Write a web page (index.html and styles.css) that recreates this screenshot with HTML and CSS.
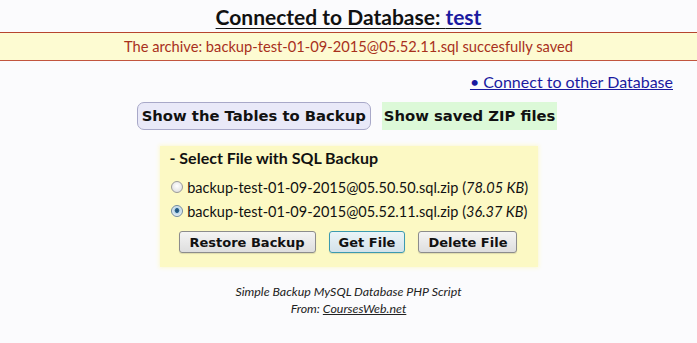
FILE: index.html
```html
<!DOCTYPE html>
<html>
<head>
<meta charset="utf-8">
<link rel="stylesheet" href="styles.css">
</head>
<body>
<h1 class="title">Connected to Database: <span class="dbname">test</span></h1>
<div class="msg">The archive: backup-test-01-09-2015@05.52.11.sql succesfully saved</div>
<div class="connect"><a href="#" class="connect-link">• Connect to other Database</a></div>
<div class="tabs">
  <span class="tab tab-tables">Show the Tables to Backup</span>
  <span class="tab tab-zip">Show saved ZIP files</span>
</div>
<form class="panel">
  <div class="panel-title">- Select File with SQL Backup</div>
  <label class="row"><input type="radio" name="f" class="radio"> backup-test-01-09-2015@05.50.50.sql.zip (<em>78.05 KB</em>)</label>
  <label class="row"><input type="radio" name="f" class="radio" checked> backup-test-01-09-2015@05.52.11.sql.zip (<em>36.37 KB</em>)</label>
  <div class="actions">
    <button type="button" class="btn btn-wide">Restore Backup</button>
    <button type="button" class="btn btn-focus">Get File</button>
    <button type="button" class="btn">Delete File</button>
  </div>
</form>
<div class="footer">
  <div>Simple Backup MySQL Database PHP Script</div>
  <div>From: <a href="#" class="footer-link">CoursesWeb.net</a></div>
</div>
</body>
</html>
```
FILE: styles.css
```css
html, body {
  margin: 0;
  padding: 0;
  background: #fbfbfd;
}
body {
  font-family: Lato, "Open Sans", sans-serif;
  color: #111;
  width: 697px;
  height: 343px;
  overflow: hidden;
}
.title {
  margin: 0;
  padding-top: 4px;
  height: 28px;
  text-align: center;
  font-size: 21px;
  font-weight: bold;
  text-decoration: underline;
  text-underline-offset: 3px;
  text-decoration-thickness: 1px;
  line-height: 26px;
  color: #111;
}
.dbname {
  color: #1a1aa0;
}
.msg {
  height: 27px;
  line-height: 27px;
  background: #fdfbd2;
  border-top: 1px solid #b6452f;
  border-bottom: 1px solid #c2553e;
  color: #a8301c;
  font-size: 14.7px;
  text-align: center;
}
.connect {
  text-align: right;
  padding-right: 24px;
  margin-top: 10px;
  height: 22px;
  line-height: 22px;
  font-size: 16px;
}
.connect-link {
  color: #1a1aa0;
  text-decoration: underline;
}
.tabs {
  display: flex;
  justify-content: center;
  gap: 11px;
  margin-top: 9px;
  padding-right: 3px;
  font-family: "DejaVu Sans", Verdana, sans-serif;
  font-weight: bold;
  font-size: 14.8px;
}
.tab {
  display: inline-block;
  height: 28px;
  line-height: 28px;
  padding: 0 4px;
  color: #111;
  box-sizing: border-box;
}
.tab-tables {
  background: #e9e9f8;
  border: 1px solid #a8a8c8;
  border-radius: 7px;
  line-height: 26px;
}
.tab-zip {
  background: #dcf9d8;
  padding: 0 2px;
}
.panel {
  display: block;
  width: 378px;
  margin: 16px auto 0;
  padding: 1px 0 14px 10px;
  box-sizing: border-box;
  background: #fcf9c4;
  box-shadow: 0 0 4px 1px #fcf9d4;
}
.panel-title {
  font-weight: bold;
  font-size: 16px;
  height: 22px;
  line-height: 22px;
  margin-bottom: 6px;
}
.row {
  display: flex;
  align-items: center;
  height: 24px;
  font-size: 14.5px;
  white-space: pre;
}
.radio {
  appearance: none;
  -webkit-appearance: none;
  margin: 0 1px 0 1px;
  width: 12px;
  height: 12px;
  border-radius: 50%;
  border: 1px solid #9a9a9a;
  background: radial-gradient(circle at 50% 40%, #ffffff 0%, #e4e4e4 70%, #cfcfcf 100%);
  box-sizing: border-box;
}
.radio:checked {
  border-color: #6f8aa0;
  background: radial-gradient(circle at 50% 45%, #1e4a6e 0%, #2f6a94 28%, #b8d4e6 36%, #e6eef4 70%, #c9d6e0 100%);
}
.actions {
  display: flex;
  gap: 13px;
  margin-top: 8px;
  padding-left: 9px;
}
.btn {
  font-family: "DejaVu Sans", Verdana, sans-serif;
  font-weight: bold;
  font-size: 13px;
  height: 22px;
  padding: 0 9px;
  color: #111;
  background: linear-gradient(#f4f4f4, #dedede);
  border: 1px solid #8c8c8c;
  border-radius: 3px;
  box-shadow: 0 1px 1px rgba(0, 0, 0, 0.12);
}
.btn-wide {
  padding: 0 10px;
}
.btn-focus {
  border-color: #3c9ab0;
  background: linear-gradient(#eaf4f8, #d4e2ea);
}
.footer {
  margin-top: 16px;
  text-align: center;
  font-style: italic;
  font-size: 12.4px;
  line-height: 17px;
  color: #222;
}
.footer-link {
  color: #222;
}
```
